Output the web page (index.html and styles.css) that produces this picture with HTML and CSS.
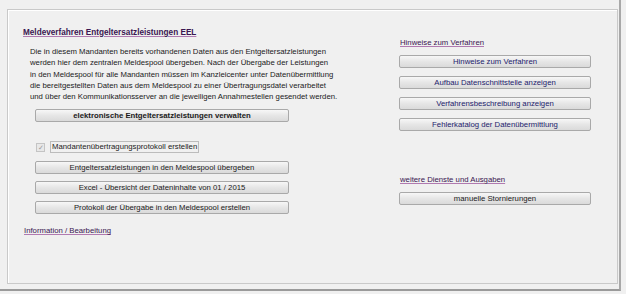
FILE: index.html
```html
<!DOCTYPE html>
<html lang="de">
<head>
    <meta charset="UTF-8">
    <title>Meldeverfahren EEL</title>
    <link rel="stylesheet" href="styles.css">
</head>
<body>
    <div class="window">
        <div class="panel">
            <!-- linke Spalte -->
            <div class="col-left">
                <a class="link title" href="#">Meldeverfahren Entgeltersatzleistungen EEL</a>
                <p class="info-text">
                    Die in diesem Mandanten bereits vorhandenen Daten aus den Entgeltersatzleistungen<br>
                    werden hier dem zentralen Meldespool übergeben. Nach der Übergabe der Leistungen<br>
                    in den Meldespool für alle Mandanten müssen im Kanzleicenter unter Datenübermittlung<br>
                    die bereitgestellten Daten aus dem Meldespool zu einer Übertragungsdatei verarbeitet<br>
                    und über den Kommunikationsserver an die jeweiligen Annahmestellen gesendet werden.
                </p>
                <button class="btn btn-left bold">elektronische Entgeltersatzleistungen verwalten</button>

                <label class="check">
                    <span class="box">&#10003;</span>
                    <span class="check-label">Mandantenübertragungsprotokoll erstellen</span>
                </label>
                <button class="btn btn-left">Entgeltersatzleistungen in den Meldespool übergeben</button>
                <button class="btn btn-left">Excel - Übersicht der Dateninhalte von 01 / 2015</button>
                <button class="btn btn-left">Protokoll der Übergabe in den Meldespool erstellen</button>

                <a class="link info-link" href="#">Information / Bearbeitung</a>
            </div>

            <!-- rechte Spalte -->
            <div class="col-right">
                <a class="link" href="#">Hinweise zum Verfahren</a>
                <div class="btn-group">
                    <button class="btn btn-right blue">Hinweise zum Verfahren</button>
                    <button class="btn btn-right blue">Aufbau Datenschnittstelle anzeigen</button>
                    <button class="btn btn-right blue">Verfahrensbeschreibung anzeigen</button>
                    <button class="btn btn-right blue">Fehlerkatalog der Datenübermittlung</button>
                </div>

                <a class="link more" href="#">weitere Dienste und Ausgaben</a>
                <div class="btn-group">
                    <button class="btn btn-right">manuelle Stornierungen</button>
                </div>
            </div>
        </div>
    </div>
</body>
</html>
```

FILE: styles.css
```css
body {
    margin: 0;
    background: #f0f0f0;
    font-family: "Liberation Sans", Arial, sans-serif;
    font-size: 7.75px;
    color: #222;
}

.window {
    width: 621px;
    height: 291px;
    box-sizing: border-box;
    padding: 9px 0 0 7px;
    border-right: 2px solid #a8a8a8;
    border-bottom: 2px solid #9a9a9a;
}

.panel {
    width: 611px;
    height: 275px;
    box-sizing: border-box;
    border: 1px solid #c9c9c9;
    box-shadow: inset 1px 1px 0 #fff;
    display: flex;
    padding: 17px 0 0 14px;
}

.col-left {
    width: 377px;
    display: flex;
    flex-direction: column;
    align-items: flex-start;
}

.col-right {
    width: 193px;
    padding-top: 10px;
    display: flex;
    flex-direction: column;
    align-items: flex-start;
}

/* Links */
.link {
    color: #3a1650;
    text-decoration: underline;
    text-decoration-color: #b07ab0;
    line-height: 11px;
    margin-left: 1px;
}

.title {
    font-size: 8.2px;
    font-weight: bold;
}

.info-link {
    margin-top: 11px;
    margin-left: 2px;
}

.more {
    margin-top: 43px;
}

.info-text {
    margin: 8px 0 0 8px;
    line-height: 11.3px;
    color: #1a1a1a;
    white-space: nowrap;
}

/* Buttons */
.btn {
    font-family: inherit;
    font-size: 7.75px;
    color: #1a1a1a;
    height: 13px;
    padding: 0;
    line-height: 11px;
    border: 1px solid #a9a9a9;
    border-radius: 2px;
    background: linear-gradient(#f7f7f7, #e6e6e6 50%, #dadada);
    cursor: pointer;
}

.btn-left {
    width: 254px;
    margin-left: 13px;
    margin-top: 7px;
}

.bold {
    font-weight: bold;
    margin-top: 7px;
}

.btn-right {
    width: 192px;
}

.btn-group {
    display: flex;
    flex-direction: column;
    gap: 8px;
    margin-top: 7px;
}

.blue {
    color: #1c1c6c;
}

/* Checkbox */
.check {
    display: flex;
    align-items: center;
    gap: 5px;
    margin: 19px 0 1px 14px;
}

.box {
    width: 7px;
    height: 7px;
    border: 1px solid #c4c4c4;
    background: #e8e8e8;
    color: #9a9a9a;
    font-size: 7px;
    line-height: 7px;
    text-align: center;
}

.check-label {
    border: 1px solid #bcbcbc;
    padding: 0 1px;
    line-height: 10px;
}
```
